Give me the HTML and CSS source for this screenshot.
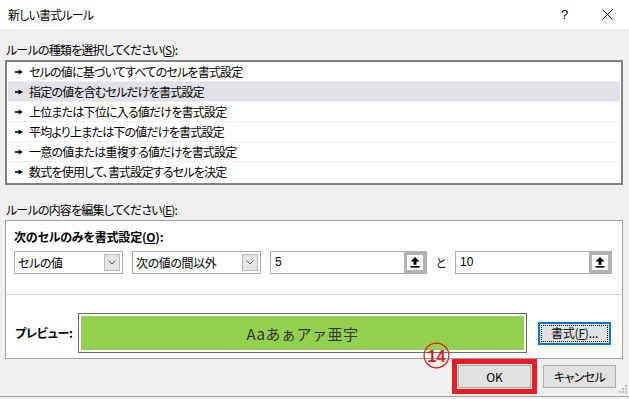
FILE: index.html
```html
<!DOCTYPE html>
<html lang="ja">
<head>
<meta charset="utf-8">
<title>新しい書式ルール</title>
<link rel="stylesheet" href="styles.css">
</head>
<body>
<div class="titlebar">
  <span class="title">新しい書式ルール</span>
  <span class="help">?</span>
  <svg class="close" width="11" height="11" viewBox="0 0 11 11"><path d="M0.5 0.5 L10.5 10.5 M10.5 0.5 L0.5 10.5" stroke="#000" stroke-width="1" fill="none"/></svg>
</div>
<div class="content">
  <div class="label">ルールの種類を選択してください(<u>S</u>):</div>
  <ul class="rules">
    <li class="rule"><svg class="bullet" width="8" height="6" viewBox="0 0 8 6"><rect x="0" y="2.2" width="4" height="1.6" fill="#000"/><polygon points="3.5,0.5 8,3 3.5,5.5" fill="#000"/></svg>セルの値に基づいてすべてのセルを書式設定</li>
    <li class="rule selected"><svg class="bullet" width="8" height="6" viewBox="0 0 8 6"><rect x="0" y="2.2" width="4" height="1.6" fill="#000"/><polygon points="3.5,0.5 8,3 3.5,5.5" fill="#000"/></svg>指定の値を含むセルだけを書式設定</li>
    <li class="rule"><svg class="bullet" width="8" height="6" viewBox="0 0 8 6"><rect x="0" y="2.2" width="4" height="1.6" fill="#000"/><polygon points="3.5,0.5 8,3 3.5,5.5" fill="#000"/></svg>上位または下位に入る値だけを書式設定</li>
    <li class="rule"><svg class="bullet" width="8" height="6" viewBox="0 0 8 6"><rect x="0" y="2.2" width="4" height="1.6" fill="#000"/><polygon points="3.5,0.5 8,3 3.5,5.5" fill="#000"/></svg>平均より上または下の値だけを書式設定</li>
    <li class="rule"><svg class="bullet" width="8" height="6" viewBox="0 0 8 6"><rect x="0" y="2.2" width="4" height="1.6" fill="#000"/><polygon points="3.5,0.5 8,3 3.5,5.5" fill="#000"/></svg>一意の値または重複する値だけを書式設定</li>
    <li class="rule last"><svg class="bullet" width="8" height="6" viewBox="0 0 8 6"><rect x="0" y="2.2" width="4" height="1.6" fill="#000"/><polygon points="3.5,0.5 8,3 3.5,5.5" fill="#000"/></svg>数式を使用して、書式設定するセルを決定</li>
  </ul>
  <div class="label label2">ルールの内容を編集してください(<u>E</u>):</div>
  <div class="panel">
    <div class="panel-title">次のセルのみを書式設定(<u>O</u>):</div>
    <div class="controls">
      <div class="select select1"><span class="select-text">セルの値</span><span class="drop"><svg width="8" height="5" viewBox="0 0 8 5"><polyline points="0.5,0.5 4,4 7.5,0.5" stroke="#606060" stroke-width="1" fill="none"/></svg></span></div>
      <div class="select select2"><span class="select-text">次の値の間以外</span><span class="drop"><svg width="8" height="5" viewBox="0 0 8 5"><polyline points="0.5,0.5 4,4 7.5,0.5" stroke="#606060" stroke-width="1" fill="none"/></svg></span></div>
      <div class="field"><span class="field-text">5</span><span class="spin"><svg width="10" height="11" viewBox="0 0 10 11"><polygon points="5,0 9.5,4.6 0.5,4.6" fill="#000"/><rect x="3.5" y="4" width="3" height="3.8" fill="#000"/><rect x="0.5" y="9" width="9" height="1.6" fill="#000"/></svg></span></div>
      <span class="to">と</span>
      <div class="field"><span class="field-text">10</span><span class="spin"><svg width="10" height="11" viewBox="0 0 10 11"><polygon points="5,0 9.5,4.6 0.5,4.6" fill="#000"/><rect x="3.5" y="4" width="3" height="3.8" fill="#000"/><rect x="0.5" y="9" width="9" height="1.6" fill="#000"/></svg></span></div>
    </div>
    <div class="sep"></div>
    <div class="preview-row">
      <span class="preview-label">プレビュー:</span>
      <div class="preview-box"><div class="preview-fill">Aaあぁアァ亜宇</div></div>
      <button class="btn btn-format"><span class="focus">書式(<u>F</u>)...</span></button>
    </div>
  </div>
  <div class="actions">
    <div class="highlight"><button class="btn btn-ok">OK</button></div>
    <button class="btn btn-cancel">キャンセル</button>
  </div>
</div>
<div class="footer-line"></div>
<svg class="badge" width="27" height="27" viewBox="0 0 27 27"><circle cx="13.5" cy="13.5" r="12.4" stroke="#e8141b" stroke-width="1.2" fill="none"/><text x="13.5" y="19.5" text-anchor="middle" class="badge-text">14</text></svg>
<svg class="grip" width="8" height="8" viewBox="0 0 8 8"><rect x="6" y="0" width="2" height="2" fill="#bcbcbc"/><rect x="3" y="3" width="2" height="2" fill="#bcbcbc"/><rect x="6" y="3" width="2" height="2" fill="#bcbcbc"/><rect x="0" y="6" width="2" height="2" fill="#bcbcbc"/><rect x="3" y="6" width="2" height="2" fill="#bcbcbc"/><rect x="6" y="6" width="2" height="2" fill="#bcbcbc"/></svg>
</body>
</html>
```
FILE: styles.css
```css
* { box-sizing: border-box; }
html, body { margin: 0; padding: 0; }
body {
  width: 629px;
  height: 399px;
  overflow: hidden;
  position: relative;
  background: #f0f0f0;
  color: #000;
  font-family: "Noto Sans CJK JP", "Noto Sans", sans-serif;
  font-size: 12px;
  font-feature-settings: "palt";
  letter-spacing: -0.8px;
}
u { text-decoration: underline; text-underline-offset: 1px; }

.titlebar {
  height: 29px;
  background: #fff;
  display: flex;
  align-items: center;
  padding-left: 8px;
}
.title { flex: 1; line-height: 14px; }
.help { width: 8px; font-size: 13px; line-height: 14px; margin-right: 33px; font-family: "Liberation Sans", sans-serif; letter-spacing: 0; }
.close { margin-right: 16px; }

.content { padding: 0 6px 0 5px; }
.label { margin: 14px 0 0 1px; height: 14px; line-height: 14px; }
.label2 { margin-top: 18px; }

.rules {
  list-style: none;
  margin: 3px 0 0;
  padding: 0 1px;
  height: 125px;
  border: 2px solid #828282;
  background: #fff;
}
.rule {
  height: 20px;
  border-bottom: 1px solid #f0f0f0;
  display: flex;
  align-items: center;
  padding-left: 7px;
  line-height: 14px;
}
.rule.last { border-bottom: none; }
.rule.selected { background: #e1e1e7; }
.bullet { margin-right: 6px; flex: none; }

.panel {
  margin-top: 3px;
  height: 139px;
  border: 1px solid #a0a0a0;
  background: #fff;
  padding: 0 7px 0 8px;
}
.panel-title { padding-top: 9px; height: 23px; line-height: 14px; font-weight: bold; letter-spacing: -0.2px; }
.controls { margin-top: 7px; height: 23px; display: flex; align-items: stretch; }
.select {
  display: flex;
  align-items: center;
  border: 1px solid #adadad;
  background: #fff;
  padding: 0 2px 0 3px;
  margin-right: 9px;
}
.select1 { width: 109px; }
.select2 { width: 129px; }
.select-text { flex: 1; line-height: 14px; letter-spacing: -0.4px; }
.drop {
  width: 16px;
  height: 17px;
  background: #e5e5e5;
  border: 1px solid #bcbcbc;
  display: flex;
  align-items: center;
  justify-content: center;
}
.field {
  width: 157px;
  display: flex;
  border: 1px solid #adadad;
  background: #fff;
}
.field-text { flex: 1; padding-left: 4px; line-height: 21px; font-family: "Liberation Sans", sans-serif; font-size: 12px; letter-spacing: 0; }
.spin {
  width: 22px;
  border: 3px solid #b3b3b3;
  background: #fff;
  display: flex;
  align-items: center;
  justify-content: center;
}
.to { width: 28px; text-align: center; line-height: 23px; color: #1a1a40; letter-spacing: 0; }

.sep { margin: 20px -6px 0 -7px; height: 1px; background: #cfcfcf; }

.preview-row { margin-top: 18px; height: 40px; display: flex; align-items: center; }
.preview-label { width: 64px; padding-left: 1px; font-weight: bold; line-height: 14px; letter-spacing: -0.2px; }
.preview-box { width: 449px; height: 40px; border: 1px solid #6b6b6b; padding: 2px; background: #fff; }
.preview-fill {
  height: 100%;
  background: #92d050;
  display: flex;
  align-items: center;
  justify-content: center;
  font-size: 15px;
  color: #333;
  font-feature-settings: normal;
  letter-spacing: 0.5px;
}

.btn {
  font-family: inherit;
  font-size: 12px;
  font-feature-settings: "palt";
  letter-spacing: -0.6px;
  color: #000;
  background: #e1e1e1;
  border: 1px solid #adadad;
  width: 73px;
  height: 23px;
  padding: 0;
  display: flex;
  align-items: center;
  justify-content: center;
}
.btn-ok { letter-spacing: 0; }
.btn-format { margin-left: 11px; border: 2px solid #0078d7; padding: 1px; letter-spacing: -0.2px; }
.focus {
  width: 100%;
  height: 100%;
  border: 1px dotted #000;
  display: flex;
  align-items: center;
  justify-content: center;
  line-height: 14px;
}

.actions { display: flex; justify-content: flex-end; align-items: center; padding-right: 7px; height: 35px; }
.highlight { border: 5px solid #ed1c24; padding: 1px; }
.btn-cancel { margin-left: 6px; }

.footer-line { margin-top: 2px; height: 1px; background: #a0a0a0; }

.badge { position: absolute; left: 423px; top: 342px; }
.badge-text { font-family: "Liberation Sans", sans-serif; font-weight: bold; font-size: 16px; fill: #e8141b; letter-spacing: 0; }
.grip { position: absolute; left: 619px; top: 385px; }
```
